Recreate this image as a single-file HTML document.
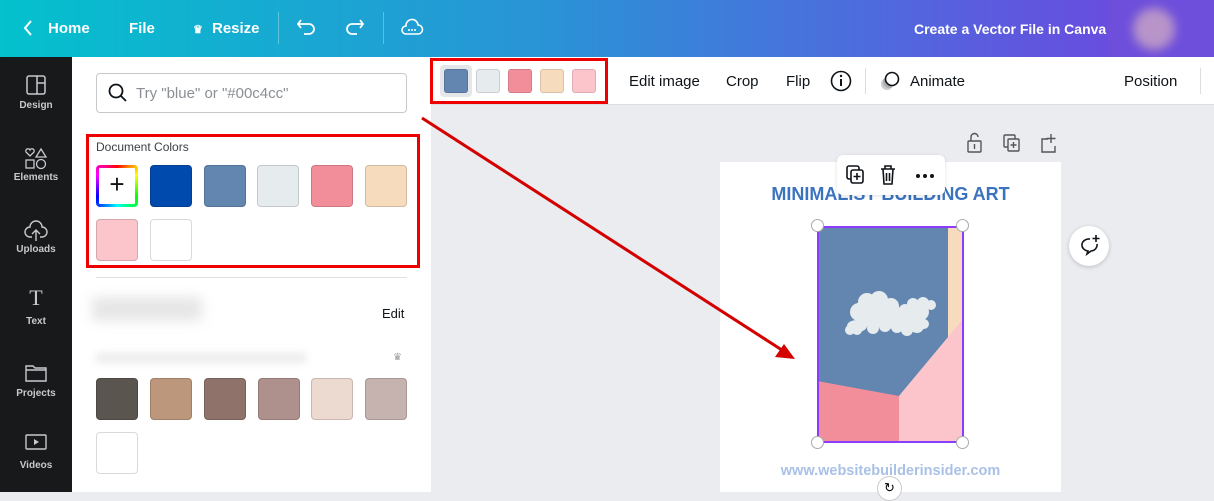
<!DOCTYPE html><html><head><style>
*{margin:0;padding:0;box-sizing:border-box}
body{width:1214px;height:492px;overflow:hidden;font-family:"Liberation Sans",sans-serif;position:relative;background:#ebecf0}
.a{position:absolute}
.hdr{left:0;top:0;width:1214px;height:57px;background:linear-gradient(90deg,#03c1cd 0%,#2a93d6 45%,#4c6ddd 70%,#7340e0 100%);color:#fff;font-weight:bold;font-size:15px}
.hdr span{position:absolute;top:20px}
.side{left:0;top:57px;width:72px;height:435px;background:#18191b;color:#c8c9cc;font-size:10px;font-weight:bold;text-align:center}
.side div{position:absolute;width:72px;left:0}
.panel{left:72px;top:57px;width:359px;height:435px;background:#fff}
.sw{position:absolute;width:42px;height:42px;border-radius:4px;border:1px solid rgba(0,0,0,.15)}
.tb{left:431px;top:57px;width:783px;height:48px;background:#fff;border-bottom:1px solid #dcdde0;font-size:15px;color:#0e1318}
.tb span{position:absolute;top:16px}
.ts{position:absolute;top:12px;width:24px;height:24px;border-radius:3px;border:1px solid rgba(0,0,0,.12)}
</style></head><body>
<div class="a hdr">
<svg class="a" style="left:22px;top:19px" width="12" height="18"><path d="M9 2L3 9l6 7" stroke="#fff" stroke-width="2" fill="none"/></svg>
<span style="left:48px">Home</span><span style="left:129px">File</span>
<span style="left:193px;font-size:11px;top:23px">♛</span><span style="left:212px">Resize</span>
<div class="a" style="left:278px;top:12px;width:1px;height:32px;background:rgba(255,255,255,.3)"></div>
<svg class="a" style="left:296px;top:17px" width="22" height="20"><path d="M5 3L2 7l3 4M2 7h11a5 5 0 010 10H8" stroke="#fff" stroke-width="1.8" fill="none"/></svg>
<svg class="a" style="left:343px;top:17px" width="22" height="20"><path d="M17 3l3 4-3 4M20 7H9a5 5 0 000 10h5" stroke="#fff" stroke-width="1.8" fill="none"/></svg>
<div class="a" style="left:383px;top:12px;width:1px;height:32px;background:rgba(255,255,255,.3)"></div>
<svg class="a" style="left:400px;top:16px" width="24" height="22"><path d="M6 18a4 4 0 010-8 6 6 0 0112-1 4.5 4.5 0 010 9z" stroke="#fff" stroke-width="1.6" fill="none"/><circle cx="9" cy="14" r="1" fill="#fff"/><circle cx="12" cy="14" r="1" fill="#fff"/><circle cx="15" cy="14" r="1" fill="#fff"/></svg>
<span style="left:914px;font-size:14px;top:21px">Create a Vector File in Canva</span>
<div class="a" style="left:1108px;top:0;width:106px;height:57px;background:#6e4fdb"></div>
<div class="a" style="left:1133px;top:8px;width:42px;height:42px;border-radius:50%;background:#b894c9;filter:blur(5px)"></div>
</div>
<div class="a side">
<svg class="a" style="left:26px;top:18px" width="20" height="20"><rect x="1" y="1" width="18" height="18" rx="2" stroke="#c8c9cc" stroke-width="1.5" fill="none"/><path d="M11 1v18M11 8h8" stroke="#c8c9cc" stroke-width="1.5"/></svg>
<div style="top:43px">Design</div>
<svg class="a" style="left:24px;top:90px" width="24" height="24"><path d="M6 9l-4-4a2 2 0 014-2 2 2 0 014 2z" stroke="#c8c9cc" fill="none" stroke-width="1.3"/><path d="M17 2l5 8h-10z" stroke="#c8c9cc" fill="none" stroke-width="1.3"/><rect x="2" y="13" width="8" height="8" stroke="#c8c9cc" fill="none" stroke-width="1.3"/><circle cx="17" cy="17" r="4.5" stroke="#c8c9cc" fill="none" stroke-width="1.3"/></svg>
<div style="top:115px">Elements</div>
<svg class="a" style="left:24px;top:162px" width="24" height="24"><path d="M8 18H6a5 5 0 010-10 6 6 0 0112 0 5 5 0 010 10h-2M12 22V12M8 15l4-4 4 4" stroke="#c8c9cc" fill="none" stroke-width="1.4"/></svg>
<div style="top:187px">Uploads</div>
<div style="top:228px;font-size:22px;font-weight:normal;font-family:'Liberation Serif',serif">T</div>
<div style="top:259px">Text</div>
<svg class="a" style="left:25px;top:307px" width="22" height="18"><path d="M1 2h7l2 2h11v13H1z M1 6h20" stroke="#c8c9cc" fill="none" stroke-width="1.4"/></svg>
<div style="top:331px">Projects</div>
<svg class="a" style="left:25px;top:377px" width="22" height="16"><rect x="1" y="1" width="20" height="14" rx="1" stroke="#c8c9cc" fill="none" stroke-width="1.4"/><path d="M9 5l5 3-5 3z" fill="#c8c9cc"/></svg>
<div style="top:403px">Videos</div>
</div>
<div class="a panel">
<div class="a" style="left:24px;top:16px;width:311px;height:40px;border:1px solid #c6c8cc;border-radius:4px"></div>
<svg class="a" style="left:36px;top:26px" width="20" height="20"><circle cx="8" cy="8" r="6.5" stroke="#0e1318" stroke-width="1.8" fill="none"/><path d="M13 13l5 5" stroke="#0e1318" stroke-width="1.8"/></svg>
<div class="a" style="left:64px;top:28px;font-size:15px;color:#8b8f94">Try "blue" or "#00c4cc"</div>
<div class="a" style="left:24px;top:83px;font-size:12px;color:#3c4045">Document Colors</div>
<div class="sw" style="left:24px;top:108px;border:3px solid transparent;background:linear-gradient(#fff,#fff) padding-box,conic-gradient(red,#ff0,#0f0,#0ff,#00f,#f0f,red) border-box;text-align:center;font-size:26px;line-height:33px;color:#111">+</div>
<div class="sw" style="left:78px;top:108px;background:#004aad"></div>
<div class="sw" style="left:132px;top:108px;background:#6386b0"></div>
<div class="sw" style="left:185px;top:108px;background:#e6ebee"></div>
<div class="sw" style="left:239px;top:108px;background:#f28e9a"></div>
<div class="sw" style="left:293px;top:108px;background:#f6dcbd"></div>
<div class="sw" style="left:24px;top:162px;background:#fbc5cb"></div>
<div class="sw" style="left:78px;top:162px;background:#fff"></div>
<div class="a" style="left:24px;top:220px;width:311px;height:1px;background:#e0e1e3"></div>
<div class="a" style="left:20px;top:240px;width:110px;height:24px;background:#e6e6e7;filter:blur(6px)"></div>
<div class="a" style="left:24px;top:296px;width:210px;height:10px;background:#ececed;filter:blur(4px)"></div>
<div class="a" style="left:310px;top:249px;font-size:13px;color:#0e1318">Edit</div>
<div class="a" style="left:321px;top:295px;font-size:10px;color:#9a9ca0">♛</div>
<div class="sw" style="left:24px;top:321px;background:#5b5550"></div>
<div class="sw" style="left:78px;top:321px;background:#bd977c"></div>
<div class="sw" style="left:132px;top:321px;background:#8f736b"></div>
<div class="sw" style="left:186px;top:321px;background:#ae918c"></div>
<div class="sw" style="left:239px;top:321px;background:#ecd9d0"></div>
<div class="sw" style="left:293px;top:321px;background:#c6b3af"></div>
<div class="sw" style="left:24px;top:375px;background:#fff"></div>
</div>
<div class="a" style="left:86px;top:134px;width:334px;height:134px;border:3px solid #e00"></div>
<div class="a tb">
<div class="a" style="left:9px;top:8px;width:32px;height:32px;border-radius:4px;background:#e4e6ea"></div>
<div class="ts" style="left:13px;background:#6386b0"></div>
<div class="ts" style="left:45px;background:#e6ebee"></div>
<div class="ts" style="left:77px;background:#f28e9a"></div>
<div class="ts" style="left:109px;background:#f6dcbd"></div>
<div class="ts" style="left:141px;background:#fbc5cb"></div>
<span style="left:198px">Edit image</span><span style="left:295px">Crop</span><span style="left:355px">Flip</span>
<svg class="a" style="left:399px;top:13px" width="22" height="22"><circle cx="11" cy="11" r="9.5" stroke="#0e1318" stroke-width="1.6" fill="none"/><path d="M11 9v7" stroke="#0e1318" stroke-width="2"/><circle cx="11" cy="6" r="1.2" fill="#0e1318"/></svg>
<div class="a" style="left:434px;top:11px;width:1px;height:26px;background:#dcdde0"></div>
<svg class="a" style="left:448px;top:13px" width="24" height="24"><circle cx="8" cy="14" r="6" fill="#ccc"/><circle cx="10" cy="12" r="6" fill="#999" opacity=".6"/><circle cx="13" cy="9" r="6.5" stroke="#0e1318" stroke-width="1.6" fill="#fff"/></svg>
<span style="left:479px">Animate</span><span style="left:693px">Position</span>
<div class="a" style="left:769px;top:11px;width:1px;height:26px;background:#dcdde0"></div>
</div>
<div class="a" style="left:430px;top:58px;width:178px;height:46px;border:3px solid #e00"></div>
<svg class="a" style="left:962px;top:131px" width="100" height="26"><g stroke="#555" stroke-width="1.4" fill="none"><rect x="6" y="10" width="13" height="11" rx="1"/><path d="M9 10V6a3.5 3.5 0 017 0"/><path d="M12.5 13v5"/><rect x="42" y="4" width="11" height="12" rx="1"/><rect x="46" y="8" width="11" height="12" rx="1" fill="#ebecf0"/><path d="M51.5 11v6M48.5 14h6"/><path d="M86 8h-6v13h13v-6M89 3v9M84.5 7.5h9"/></g></svg>
<div class="a" style="left:720px;top:162px;width:341px;height:330px;background:#fff"></div>
<div class="a" style="left:720px;top:184px;width:341px;text-align:center;font-size:18px;font-weight:bold;color:#3b73bf">MINIMALIST BUILDING ART</div>
<div class="a" style="left:837px;top:155px;width:108px;height:40px;background:#fff;border-radius:6px;box-shadow:0 1px 4px rgba(0,0,0,.12)"></div>
<svg class="a" style="left:845px;top:163px" width="95" height="26"><g stroke="#0e1318" stroke-width="1.6" fill="none"><rect x="2" y="3" width="12" height="13" rx="2"/><rect x="6" y="7" width="12" height="13" rx="2" fill="#fff"/><path d="M12 10v7M8.5 13.5h7"/><path d="M36 6h14M40 6V3h6v3M38 6l1 15h8l1-15M41.5 10v8M44.5 10v8"/></g><circle cx="73" cy="13" r="2" fill="#0e1318"/><circle cx="80" cy="13" r="2" fill="#0e1318"/><circle cx="87" cy="13" r="2" fill="#0e1318"/></svg>
<svg class="a" style="left:817px;top:226px" width="147" height="217"><rect width="147" height="217" fill="#6386b0"/><path d="M131 0h16v92l-16 28z" fill="#f6dcbd"/><path d="M147 92V217H82V170z" fill="#fbc5cb"/><path d="M0 155l82 15v47H0z" fill="#f28e9a"/><path d="M82 170L131 120 147 92z" fill="#fbc5cb"/>
<g fill="#e6ebee"><ellipse cx="58" cy="86" rx="22" ry="15"/><ellipse cx="80" cy="94" rx="20" ry="9"/><ellipse cx="102" cy="86" rx="10" ry="9"/><ellipse cx="40" cy="100" rx="10" ry="6"/><circle cx="50" cy="76" r="9"/><circle cx="62" cy="74" r="9"/><circle cx="74" cy="80" r="8"/><circle cx="42" cy="86" r="9"/><circle cx="56" cy="88" r="11"/><circle cx="70" cy="90" r="9"/><circle cx="80" cy="88" r="7"/><circle cx="88" cy="84" r="6"/><circle cx="96" cy="78" r="6"/><circle cx="106" cy="77" r="6"/><circle cx="114" cy="79" r="5"/><circle cx="94" cy="90" r="7"/><circle cx="100" cy="100" r="7"/><circle cx="90" cy="104" r="6"/><circle cx="80" cy="101" r="6"/><circle cx="68" cy="100" r="6"/><circle cx="56" cy="102" r="6"/><circle cx="44" cy="100" r="5"/><circle cx="33" cy="104" r="5"/><circle cx="40" cy="104" r="5"/><circle cx="107" cy="98" r="5"/></g></svg>
<div class="a" style="left:817px;top:226px;width:147px;height:217px;border:2px solid #8b3dff"></div>
<div class="a" style="left:811px;top:219px;width:13px;height:13px;border-radius:50%;background:#fff;border:1px solid #aaa"></div>
<div class="a" style="left:956px;top:219px;width:13px;height:13px;border-radius:50%;background:#fff;border:1px solid #aaa"></div>
<div class="a" style="left:811px;top:436px;width:13px;height:13px;border-radius:50%;background:#fff;border:1px solid #aaa"></div>
<div class="a" style="left:956px;top:436px;width:13px;height:13px;border-radius:50%;background:#fff;border:1px solid #aaa"></div>
<div class="a" style="left:720px;top:463px;width:341px;text-align:center;font-size:14.5px;font-weight:bold;color:#a9c1e6">www.websitebuilderinsider.com</div>
<div class="a" style="left:877px;top:476px;width:25px;height:25px;border-radius:50%;background:#fff;border:1px solid #ccc;font-size:13px;text-align:center;line-height:22px">↻</div>
<div class="a" style="left:1069px;top:226px;width:40px;height:40px;border-radius:50%;background:#fff;box-shadow:0 1px 4px rgba(0,0,0,.2)"></div>
<svg class="a" style="left:1077px;top:233px" width="26" height="26"><path d="M13 6a7 6 0 10-2 12l-1 3 4-3a7 6 0 006-7" stroke="#0e1318" stroke-width="1.6" fill="none"/><path d="M19 2v7M15.5 5.5h7" stroke="#0e1318" stroke-width="1.6"/></svg>
<svg class="a" style="left:0;top:0" width="1214" height="492"><path d="M422 118L785 352" stroke="#d40000" stroke-width="3"/><path d="M795 359l-20-2 9-13z" fill="#d40000"/></svg>
</body></html>
